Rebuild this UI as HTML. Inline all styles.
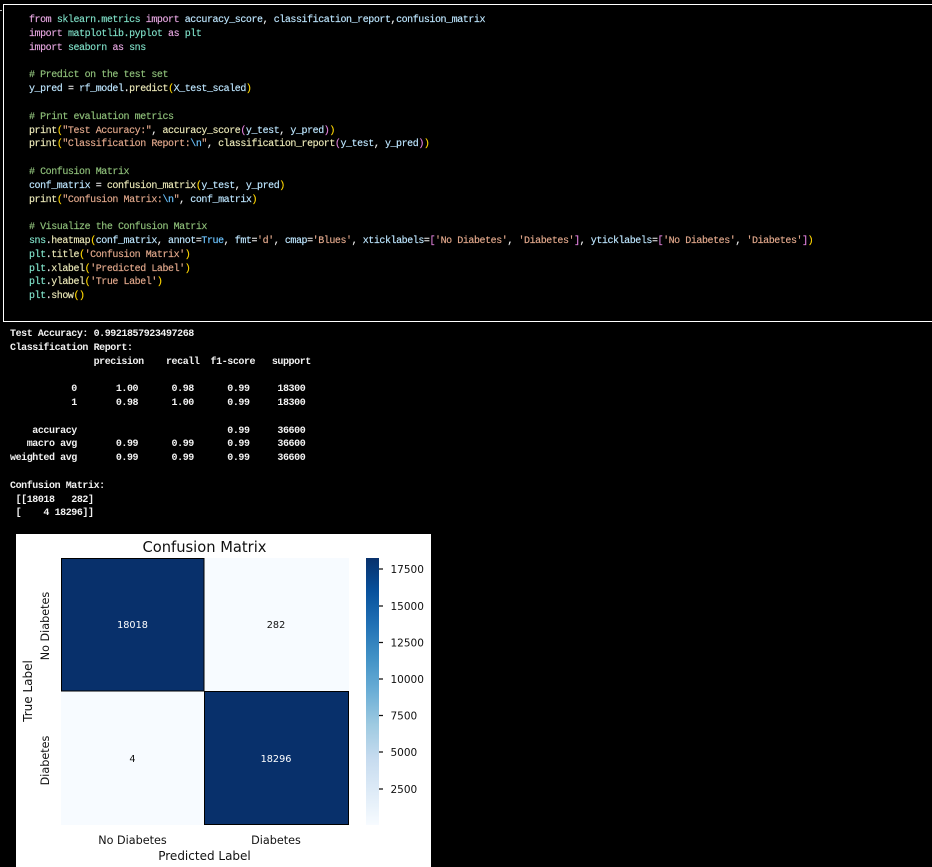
<!DOCTYPE html>
<html>
<head>
<meta charset="utf-8">
<style>
html,body{margin:0;padding:0;background:#000;width:932px;height:867px;overflow:hidden}
#frame{position:absolute;left:3px;top:4px;width:935px;height:316px;border:1px solid #fff}
pre{position:absolute;margin:0;font-family:"Liberation Mono",monospace;font-size:10px;letter-spacing:-.44px;white-space:pre}
#code{left:29px;top:14.2px;line-height:13.8px;color:#eee;-webkit-text-stroke:.15px currentColor}
#out{left:10px;top:328.2px;line-height:13.78px;letter-spacing:-.43px;color:#f2f2f2;font-weight:bold}
.k{color:#e6a6e0}.m{color:#7fe0c8}.c{color:#8fc07a}.s{color:#e3a98c}.v{color:#bde6ff}.f{color:#ece9b8}.b{color:#ffd700}.p{color:#e080dc}.t{color:#6cc4ff}.w{color:#f0f0f0}
svg{position:absolute;left:0;top:0}
svg text{font-family:"DejaVu Sans",sans-serif;fill:#111}
</style>
</head>
<body>
<div style="position:absolute;left:0;top:10px;width:2px;height:1px;background:#bbb"></div>
<div id="frame"></div>
<pre id="code"><span class="k">from</span> <span class="m">sklearn.metrics</span> <span class="k">import</span> <span class="v">accuracy_score</span><span class="w">,</span> <span class="v">classification_report</span><span class="w">,</span><span class="v">confusion_matrix</span>
<span class="k">import</span> <span class="m">matplotlib.pyplot</span> <span class="k">as</span> <span class="m">plt</span>
<span class="k">import</span> <span class="m">seaborn</span> <span class="k">as</span> <span class="m">sns</span>

<span class="c"># Predict on the test set</span>
<span class="v">y_pred</span> <span class="w">=</span> <span class="v">rf_model</span><span class="w">.</span><span class="f">predict</span><span class="b">(</span><span class="v">X_test_scaled</span><span class="b">)</span>

<span class="c"># Print evaluation metrics</span>
<span class="f">print</span><span class="b">(</span><span class="s">"Test Accuracy:"</span><span class="w">,</span> <span class="f">accuracy_score</span><span class="p">(</span><span class="v">y_test</span><span class="w">,</span> <span class="v">y_pred</span><span class="p">)</span><span class="b">)</span>
<span class="f">print</span><span class="b">(</span><span class="s">"Classification Report:</span><span class="t">\n</span><span class="s">"</span><span class="w">,</span> <span class="f">classification_report</span><span class="p">(</span><span class="v">y_test</span><span class="w">,</span> <span class="v">y_pred</span><span class="p">)</span><span class="b">)</span>

<span class="c"># Confusion Matrix</span>
<span class="v">conf_matrix</span> <span class="w">=</span> <span class="f">confusion_matrix</span><span class="b">(</span><span class="v">y_test</span><span class="w">,</span> <span class="v">y_pred</span><span class="b">)</span>
<span class="f">print</span><span class="b">(</span><span class="s">"Confusion Matrix:</span><span class="t">\n</span><span class="s">"</span><span class="w">,</span> <span class="v">conf_matrix</span><span class="b">)</span>

<span class="c"># Visualize the Confusion Matrix</span>
<span class="m">sns</span><span class="w">.</span><span class="f">heatmap</span><span class="b">(</span><span class="v">conf_matrix</span><span class="w">,</span> <span class="v">annot</span><span class="w">=</span><span class="t">True</span><span class="w">,</span> <span class="v">fmt</span><span class="w">=</span><span class="s">'d'</span><span class="w">,</span> <span class="v">cmap</span><span class="w">=</span><span class="s">'Blues'</span><span class="w">,</span> <span class="v">xticklabels</span><span class="w">=</span><span class="p">[</span><span class="s">'No Diabetes'</span><span class="w">,</span> <span class="s">'Diabetes'</span><span class="p">]</span><span class="w">,</span> <span class="v">yticklabels</span><span class="w">=</span><span class="p">[</span><span class="s">'No Diabetes'</span><span class="w">,</span> <span class="s">'Diabetes'</span><span class="p">]</span><span class="b">)</span>
<span class="m">plt</span><span class="w">.</span><span class="f">title</span><span class="b">(</span><span class="s">'Confusion Matrix'</span><span class="b">)</span>
<span class="m">plt</span><span class="w">.</span><span class="f">xlabel</span><span class="b">(</span><span class="s">'Predicted Label'</span><span class="b">)</span>
<span class="m">plt</span><span class="w">.</span><span class="f">ylabel</span><span class="b">(</span><span class="s">'True Label'</span><span class="b">)</span>
<span class="m">plt</span><span class="w">.</span><span class="f">show</span><span class="b">()</span></pre>
<pre id="out">Test Accuracy: 0.9921857923497268
Classification Report:
               precision    recall  f1-score   support

           0       1.00      0.98      0.99     18300
           1       0.98      1.00      0.99     18300

    accuracy                           0.99     36600
   macro avg       0.99      0.99      0.99     36600
weighted avg       0.99      0.99      0.99     36600

Confusion Matrix:
 [[18018   282]
 [    4 18296]]</pre>
<svg width="932" height="867" viewBox="0 0 932 867">
<defs>
<linearGradient id="blues" x1="0" y1="0" x2="0" y2="1">
<stop offset="0" stop-color="#08306b"/>
<stop offset=".125" stop-color="#08519c"/>
<stop offset=".25" stop-color="#2171b5"/>
<stop offset=".375" stop-color="#4292c6"/>
<stop offset=".5" stop-color="#6baed6"/>
<stop offset=".625" stop-color="#9ecae1"/>
<stop offset=".75" stop-color="#c6dbef"/>
<stop offset=".875" stop-color="#deebf7"/>
<stop offset="1" stop-color="#f7fbff"/>
</linearGradient>
</defs>
<rect x="16" y="534" width="415" height="333" fill="#fff"/>
<rect x="61" y="558" width="288" height="267" fill="#f7fbff"/>
<rect x="61.5" y="558.5" width="142.5" height="132.5" fill="#08306b" stroke="#000" stroke-width="1"/>
<rect x="204.5" y="691.5" width="144" height="133" fill="#08306b" stroke="#000" stroke-width="1"/>
<rect x="366" y="558" width="13" height="267" fill="url(#blues)"/>
<g stroke="#111" stroke-width="1.2">
<path d="M379 569h4M379 606h4M379 642.5h4M379 679h4M379 715.5h4M379 752h4M379 789h4"/>
</g>
<g font-size="10.5" text-anchor="start">
<text x="390.5" y="573">17500</text>
<text x="390.5" y="610">15000</text>
<text x="390.5" y="646.5">12500</text>
<text x="390.5" y="683">10000</text>
<text x="390.5" y="719.5">7500</text>
<text x="390.5" y="756">5000</text>
<text x="390.5" y="793">2500</text>
</g>
<text x="204.5" y="552" font-size="14.7" text-anchor="middle">Confusion Matrix</text>
<g font-size="9.7" text-anchor="middle">
<text x="132.5" y="628" style="fill:#fff">18018</text>
<text x="276" y="628">282</text>
<text x="132.5" y="762">4</text>
<text x="276" y="762" style="fill:#fff">18296</text>
</g>
<g font-size="11.2" text-anchor="middle">
<text x="132.5" y="844">No Diabetes</text>
<text x="276" y="844">Diabetes</text>
<text transform="translate(49,626) rotate(-90)">No Diabetes</text>
<text transform="translate(49,760.5) rotate(-90)">Diabetes</text>
</g>
<g font-size="12" text-anchor="middle">
<text x="204.5" y="860">Predicted Label</text>
<text transform="translate(32,691) rotate(-90)">True Label</text>
</g>
</svg>
</body>
</html>
